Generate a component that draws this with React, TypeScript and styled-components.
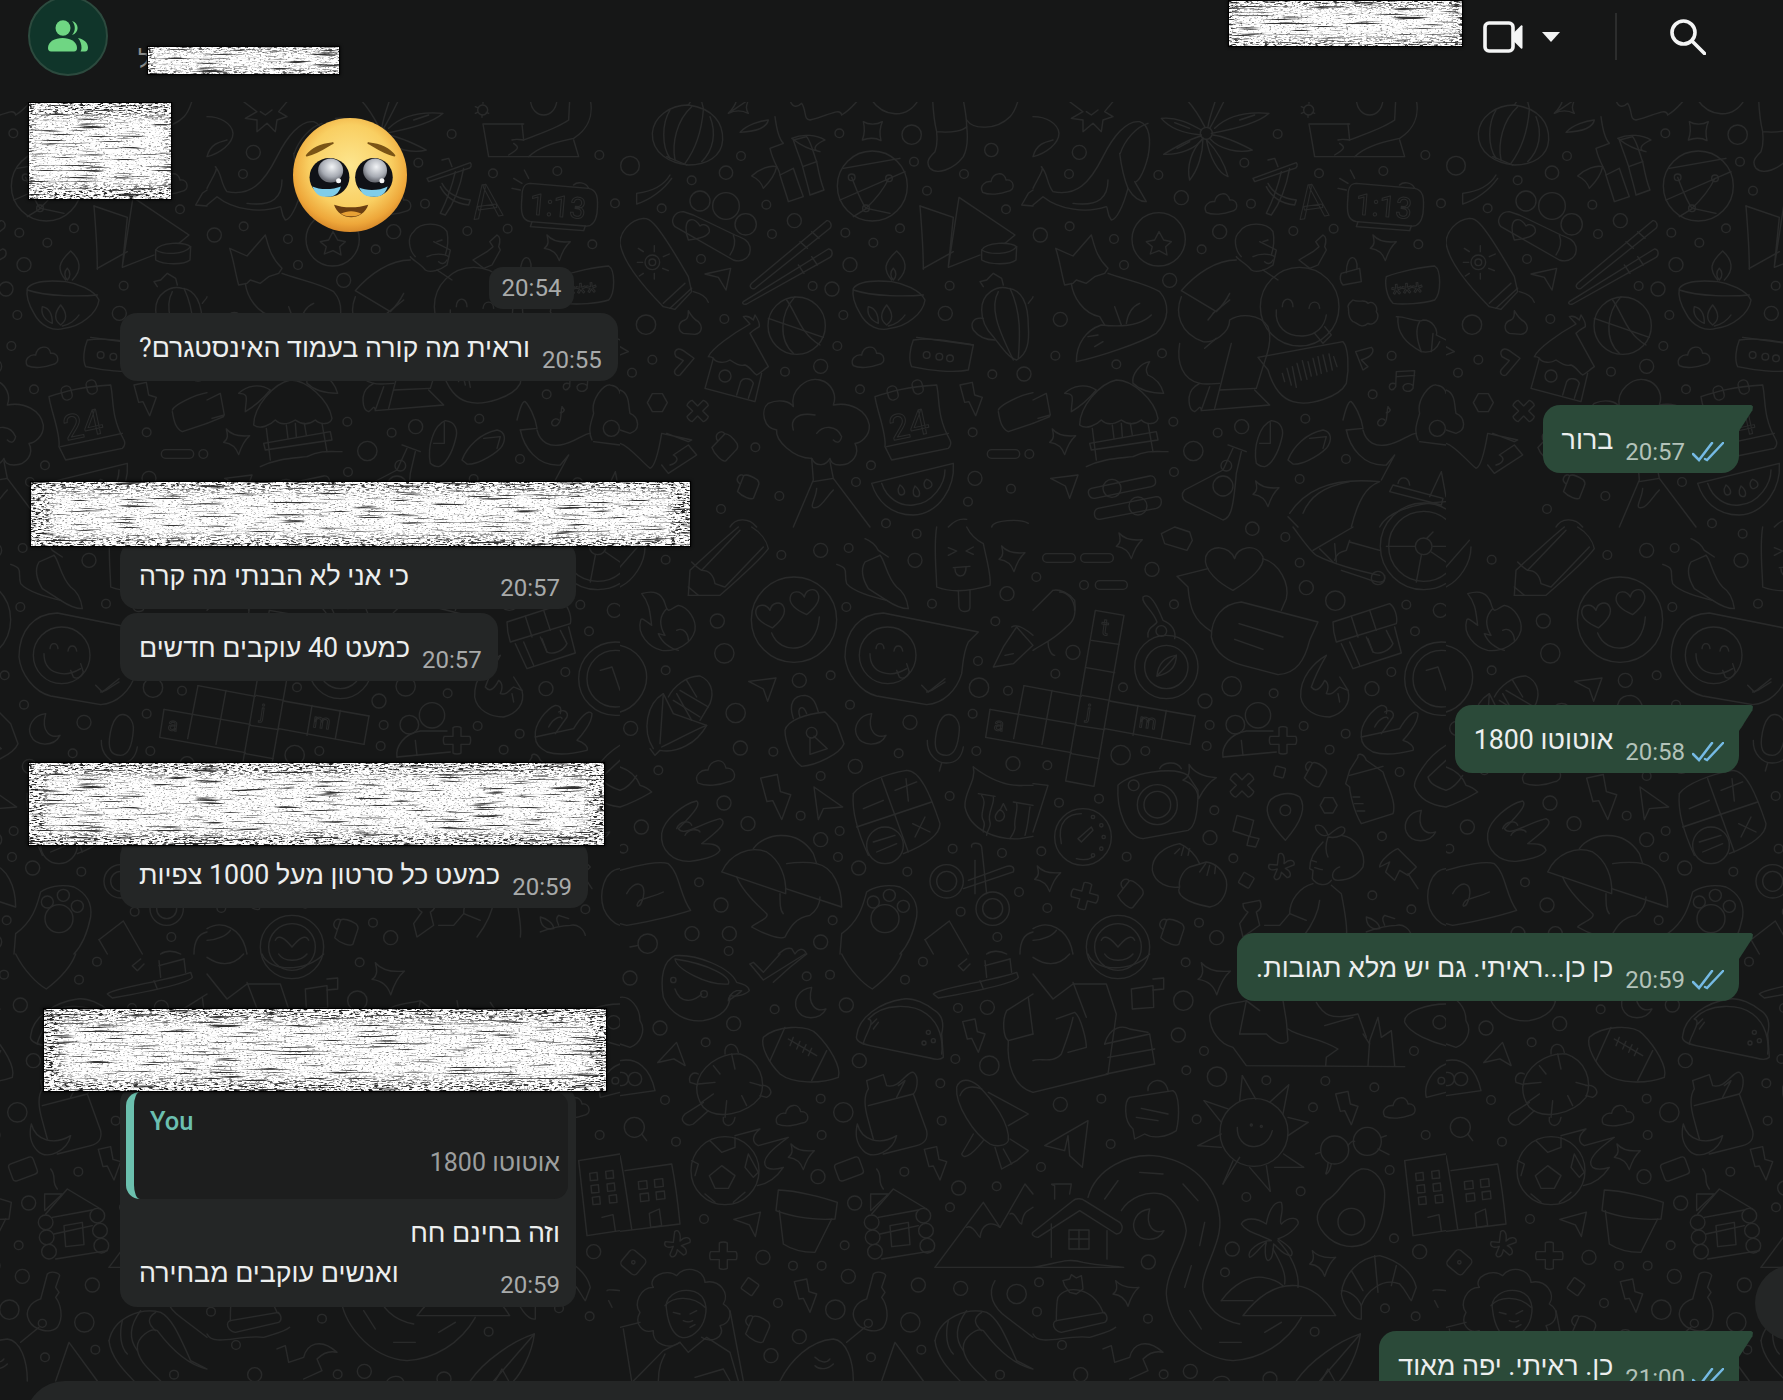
import React from "react";
import styled, { createGlobalStyle } from "styled-components";

const GlobalStyle = createGlobalStyle`
  html, body { margin: 0; padding: 0; background: #161717; }
  #root { height: 1400px; overflow: hidden; }
`;

const FONT = `Roboto, "Noto Sans", "Liberation Sans", sans-serif`;

const Page = styled.div`
  height: 1400px;
  display: flex;
  flex-direction: column;
  overflow: hidden;
  background: #161717;
  font-family: ${FONT};
  color: #eceeee;
`;

const Header = styled.header`
  flex: 0 0 102px;
  display: flex;
  align-items: flex-start;
  padding-left: 28px;
  background: #161717;
`;

const Avatar = styled.div`
  width: 80px;
  height: 80px;
  margin-top: -4px;
  box-sizing: border-box;
  border-radius: 50%;
  background: #10352a;
  border: 2px solid #2c4a3e;
  display: flex;
  align-items: center;
  justify-content: center;
  flex: none;
`;

const TitleBlock = styled.div`
  display: flex;
  align-items: flex-start;
  margin: 46px 0 0 30px;
`;

const TitleGlyph = styled.span`
  font-size: 24px;
  line-height: 26px;
  color: #8a8c8c;
  margin-right: -4px;
`;

const HeaderTools = styled.div`
  margin-left: auto;
  display: flex;
  align-items: flex-start;
  padding-right: 77px;
`;

const VideoButton = styled.div`
  display: flex;
  align-items: center;
  margin: 21px 0 0 20px;
  gap: 19px;
  height: 32px;
`;

const Caret = styled.div`
  width: 0;
  height: 0;
  border-left: 9px solid transparent;
  border-right: 9px solid transparent;
  border-top: 10px solid #f2f3f3;
`;

const ToolDivider = styled.div`
  width: 2px;
  height: 47px;
  margin: 13px 53px 0 55px;
  background: #2c2d2d;
`;

const SearchButton = styled.div`
  margin-top: 19px;
  height: 36px;
`;

const ChatPanel = styled.main`
  position: relative;
  flex: 1;
  min-height: 0;
  display: flex;
  flex-direction: column;
  overflow: hidden;
`;

const WallSvg = styled.svg`
  position: absolute;
  inset: 0;
  width: 100%;
  height: 100%;
  fill: none;
  stroke: #292a2a;
  stroke-width: 4;
  stroke-linecap: round;
  stroke-linejoin: round;
`;

const WallText = styled.text`
  font-family: Roboto, "Liberation Sans", sans-serif;
  stroke-width: 3;
  fill: none;
`;

const MessageList = styled.div`
  position: relative;
  flex: 1;
  min-height: 0;
  overflow: hidden;
  display: flex;
  flex-direction: column;
  padding: 16px 44px 0 120px;
`;

const Row = styled.div<{ $out?: boolean; $gap?: number }>`
  position: relative;
  flex: none;
  display: flex;
  justify-content: ${(p) => (p.$out ? "flex-end" : "flex-start")};
  margin-top: ${(p) => p.$gap ?? 24}px;
`;

const Bubble = styled.div<{ $out?: boolean; $w?: number }>`
  position: relative;
  display: flex;
  align-items: stretch;
  justify-content: space-between;
  gap: 12px;
  box-sizing: border-box;
  ${(p) => (p.$w ? `width: ${p.$w}px;` : "")}
  padding: 17px ${(p) => (p.$out ? 15 : 16)}px 9px 19px;
  border-radius: ${(p) => (p.$out ? "17px 0 17px 17px" : "17px")};
  background: ${(p) => (p.$out ? "#2b4a39" : "#242626")};
  ${(p) =>
    p.$out
      ? `&::after {
    content: "";
    position: absolute;
    top: 0;
    left: 100%;
    width: 14px;
    height: 26px;
    background: #2b4a39;
    clip-path: polygon(0 0, 88% 0, 100% 6%, 96% 20%, 0 100%);
  }`
      : ""}
`;

const MsgText = styled.div<{ $gapBelow?: number }>`
  font-size: 26.8px;
  line-height: 36px;
  margin-bottom: ${(p) => p.$gapBelow ?? 6}px;
  color: #eceeee;
  white-space: nowrap;
`;

const Time = styled.span<{ $out?: boolean }>`
  align-self: flex-end;
  font-size: 24px;
  line-height: 24px;
  color: ${(p) => (p.$out ? "#b3c2b9" : "#a8aaaa")};
  white-space: nowrap;
`;

const Meta = styled.div`
  align-self: flex-end;
  display: flex;
  align-items: center;
  gap: 7px;
  height: 24px;
`;

const ReplyBubble = styled.div`
  width: 456px;
  box-sizing: border-box;
  padding: 6px 16px 10px 6px;
  border-radius: 17px;
  background: #242626;
`;

const Quote = styled.div`
  box-sizing: border-box;
  margin-right: -8px;
  height: 107px;
  padding: 14px 8px 0 16px;
  border-left: 8px solid #6bc0ae;
  border-radius: 14px;
  background: #1d1e1e;
`;

const QuoteAuthor = styled.div`
  font-size: 25.5px;
  line-height: 30px;
  font-weight: 500;
  color: #6bbfb0;
  margin-bottom: 12px;
`;

const QuoteText = styled.div`
  font-size: 25px;
  line-height: 30px;
  color: #9c9e9e;
  text-align: right;
`;

const ReplyBody = styled.div`
  padding: 16px 0 0 13px;
  display: flex;
  flex-direction: column;
`;

const ReplyLine = styled.div`
  display: flex;
  justify-content: space-between;
`;

const RightLine = styled(MsgText)`
  text-align: right;
`;

const StickerBlock = styled.div`
  position: relative;
  flex: none;
  width: 454px;
  display: flex;
  flex-direction: column;
`;

const StickerFace = styled.div`
  margin-left: 173px;
  width: 114px;
  height: 114px;
`;

const StickerTime = styled.div`
  align-self: flex-end;
  margin-top: 35px;
  width: 85px;
  height: 42px;
  border-radius: 14px;
  background: #242626;
  color: #a8aaaa;
  font-size: 24px;
  line-height: 42px;
  text-align: center;
`;

const RedactBox = styled.div<{ $top?: number; $left?: number; $w: number; $h: number; $inline?: boolean }>`
  ${(p) =>
    p.$inline
      ? "position: relative; flex: none;"
      : `position: absolute; top: ${p.$top}px; left: ${p.$left}px; z-index: 2;`}
  width: ${(p) => p.$w}px;
  height: ${(p) => p.$h}px;
  box-sizing: border-box;
  border: 1px solid #000;
  box-shadow: 0 0 3px #000;
  background: #fff;
  overflow: hidden;
`;

const RedactSvg = styled.svg`
  display: block;
  width: 100%;
  height: 100%;
`;

const Composer = styled.footer`
  position: relative;
  flex: none;
  height: 60px;
  margin: 0 0 -41px 25px;
  border-radius: 40px 0 0 0;
  background: #242626;
  z-index: 3;
`;

const ScrollButton = styled.div`
  position: absolute;
  top: 1163px;
  right: -48px;
  width: 76px;
  height: 76px;
  border-radius: 50%;
  background: #242626;
  z-index: 3;
`;

/* ---------- small drawings ---------- */

const Redact = ({ w, h, top, left, inline, seed = 3 }: { w: number; h: number; top?: number; left?: number; inline?: boolean; seed?: number }) => (
  <RedactBox $w={w} $h={h} $top={top} $left={left} $inline={inline}>
    <RedactSvg aria-hidden="true">
      <rect width="100%" height="100%" fill="#fff" />
      <rect width="100%" height="100%" filter={`url(#grit${seed})`} />
      <rect x="3%" y="14%" width="94%" height="72%" fill="#fff" opacity="0.97" filter="url(#soft)" />
      <rect width="100%" height="100%" filter={`url(#speck${seed})`} />
      <rect width="100%" height="100%" filter={`url(#streak${seed})`} />
    </RedactSvg>
  </RedactBox>
);

const GroupIcon = () => (
  <svg width="40" height="32" viewBox="0 0 40 32" fill="#6fd683">
    <ellipse cx="15" cy="8" rx="7.5" ry="7.8" />
    <path d="M24 1c3.6 1 5.6 3.8 5.6 7s-2 6-5.6 7c1.8-2 2.8-4.4 2.8-7s-1-5-2.8-7z" />
    <path d="M0 28c0-6.500 7-10 14.500-10S29 21.500 29 28c0 2-1 3.500-3 3.500H3C1 31.500 0 30 0 28z" />
    <path d="M30 18c5.500 1 10 4.500 10 9.500 0 2.500-1 4-3 4h-4.500c.7-1 1-2.300 1-3.500 0-4-1.300-7.500-3.500-10z" />
  </svg>
);

const VideoIcon = () => (
  <svg width="40" height="32" viewBox="0 0 40 32">
    <rect x="2" y="2" width="28" height="28" rx="4" fill="none" stroke="#f4f5f5" strokeWidth="3.6" />
    <path d="M31 11.500 38 4.500c.7-.6 1.500-.2 1.500.7v21.600c0 .9-.8 1.300-1.500.7L31 20.500z" fill="#f4f5f5" />
  </svg>
);

const SearchIcon = () => (
  <svg width="36" height="36" viewBox="0 0 36 36" fill="none" stroke="#f4f5f5" strokeWidth="3.6" strokeLinecap="round">
    <circle cx="13.500" cy="13.500" r="11.500" />
    <path d="M22 22 34.500 34.500" />
  </svg>
);

const Ticks = () => (
  <svg width="32" height="20" viewBox="0 0 32 20" fill="none" stroke="#75bae4" strokeWidth="2.5" strokeLinecap="round">
    <path d="M1 12 7 18 20 1" />
    <path d="M13 17 15 18 31 1" />
  </svg>
);

const PleadingFace = () => (
  <svg width="114" height="114" viewBox="0 0 100 100">
    <defs>
      <radialGradient id="faceFill" cx="50%" cy="42%" r="58%">
        <stop offset="0%" stopColor="#fde68f" />
        <stop offset="62%" stopColor="#f9cf62" />
        <stop offset="88%" stopColor="#eea73a" />
        <stop offset="100%" stopColor="#d98a2a" />
      </radialGradient>
      <radialGradient id="eyeShine" cx="55%" cy="35%" r="60%">
        <stop offset="0%" stopColor="#f2f4f6" />
        <stop offset="70%" stopColor="#a7abb3" />
        <stop offset="100%" stopColor="#6d7078" />
      </radialGradient>
    </defs>
    <ellipse cx="50" cy="50" rx="50" ry="50" fill="url(#faceFill)" />
    <path d="M12 33C17 26 26 23 35 22 32 23 24 30 12 33Z" fill="#7a5416" stroke="#7a5416" strokeWidth="1.500" strokeLinejoin="round" />
    <path d="M89 33C84 26 75 23 66 22 69 23 77 30 89 33Z" fill="#7a5416" stroke="#7a5416" strokeWidth="1.500" strokeLinejoin="round" />
    <ellipse cx="32" cy="52" rx="17.500" ry="17" fill="#0f1116" />
    <ellipse cx="71" cy="52" rx="16.500" ry="17" fill="#0f1116" />
    <ellipse cx="33" cy="46" rx="11" ry="10.500" fill="url(#eyeShine)" />
    <ellipse cx="72" cy="46" rx="10.500" ry="10.500" fill="url(#eyeShine)" />
    <circle cx="40" cy="55" r="2.200" fill="#f5f6f7" />
    <circle cx="78" cy="55" r="2.200" fill="#f5f6f7" />
    <path d="M17 60C23 63 35 63 42 60 40 67 35 70 28 69 22 69 19 65 17 60Z" fill="#7fcdea" />
    <path d="M58 61C64 64 76 64 83 60 81 67 76 70 69 69 63 69 60 66 58 61Z" fill="#7fcdea" />
    <path d="M36 76C44 79 57 79 66 76 64 83 57 87 51 87 45 87 38 83 36 76Z" fill="#6b3f11" />
    <path d="M42 84C47 81 55 81 60 84 56 87 46 87 42 84Z" fill="#e8a135" />
  </svg>
);

/* ---------- wallpaper ---------- */

type Dot = [number, number, number];
const Dots = ({ list }: { list: Dot[] }) => (
  <>
    {list.map(([x, y, r], i) => (
      <circle key={i} cx={x} cy={y} r={r} />
    ))}
  </>
);
const Paths = ({ list }: { list: string[] }) => (
  <>
    {list.map((d, i) => (
      <path key={i} d={d} />
    ))}
  </>
);
const Sym = ({ d, x, y, s = 1, r = 0 }: { d: string; x: number; y: number; s?: number; r?: number }) => (
  <path d={d} transform={`translate(${x} ${y}) rotate(${r}) scale(${s})`} strokeWidth={4 / s} />
);

const CLOUD = "M-40 25C-52 5 -30 -10 -15 -7C-10 -35 25 -40 30 -12C55 -15 60 20 35 22C15 30 -20 35 -40 25Z";
const STAR = "M-32 -35C-15 -15 10 -12 38 -15C20 0 12 20 5 42C-2 20 -15 8 -40 5C-25 -5 -28 -20 -32 -35Z";
const BOLT = "M-32 -42L5 -50L12 -12L35 -5L15 50L-5 8L-18 10Z";
const LOCK = "M-35 -10L15 -35C25 -35 35 -15 40 5C40 15 35 20 30 22L-10 42C-20 42 -35 15 -35 -10Z M-12 -22C-18 -48 14 -52 15 -35";
const PLANE = "M-42 -15L40 -25L15 45L2 8Z";
const PLUS = "M-12 -38C-8 -42 8 -42 12 -38V-12H38C42 -8 42 8 38 12H12V38C8 42 -8 42 -12 38V12H-38C-42 8 -42 -8 -38 -12H-12Z";
const MOON = "M5 -50C-35 -45 -50 -10 -40 15C-25 50 30 50 48 15C20 25 -10 5 5 -50Z";
const HEART = "M0 38C-30 20 -48 0 -42 -20C-35 -40 -8 -38 0 -15C8 -38 35 -40 42 -20C48 0 30 20 0 38Z";
const HEX = "M-15 -27H15L30 0L15 27H-15L-30 0Z";
const ASTER = "M-8 -40C0 -48 12 -40 8 -12C28 -30 42 -20 38 -8L12 2C32 12 30 28 18 30L0 14C-4 40 -20 40 -22 28L-12 4C-34 12 -42 0 -36 -10L-12 -8Z";

const G1: string[] = [
  "M205 15C280 25 310 70 308 120C305 170 260 195 205 195C150 190 95 160 97 100C100 50 150 15 205 15Z",
  "M150 30C125 70 125 140 150 175", "M215 20C170 60 155 130 165 180", "M250 30C245 90 225 150 195 190", "M270 50C290 100 280 150 245 185",
  "M140 170L200 195", "M205 15L215 0L245 5L250 25", "M150 225C130 260 90 275 50 280L50 312C90 300 130 270 155 235",
  "M360 97C380 75 420 62 445 60C440 85 400 95 360 97Z", "M465 50C470 90 480 120 490 130L450 145C460 190 480 210 480 225L520 205",
  "M480 225C490 260 500 285 505 305L550 290C535 250 525 220 520 205", "M520 120C530 150 540 175 548 200L590 185C580 160 575 130 560 110Z",
  "M548 200C555 230 565 260 570 285L612 270C600 240 595 210 590 185", "M515 115C550 100 590 105 615 120C590 130 570 150 600 155C570 150 540 135 515 115Z",
  "M395 228C420 205 450 195 470 200C465 225 450 245 430 265C425 250 410 235 395 228Z",
  "M510 0C515 20 530 25 545 10C560 30 550 60 570 60C620 50 660 20 665 45C690 30 700 15 715 0",
  "M325 40C335 30 345 20 350 0M385 0C380 15 375 25 385 40C365 30 345 30 325 40Z",
  "M670 205L840 175M660 300L855 215M695 232C710 270 720 300 738 325M807 235C790 270 765 300 738 325M700 350L740 325L810 340",
  "M730 65C745 75 770 75 787 65C778 85 778 100 783 122C765 112 750 112 727 120C735 100 735 85 730 65Z",
  "M938 0C940 40 945 75 950 95C1000 100 1030 90 1040 80C1045 120 1040 150 1030 170C1000 210 950 225 930 205C915 185 930 170 945 155C955 130 950 110 950 95",
  "M1040 60C1060 90 1130 90 1170 50C1185 35 1190 15 1195 0", "M755 0C790 50 860 60 895 0", "M1030 0C1035 30 1040 50 1040 80",
  "M900 318L1000 352L985 500L1017 292L1185 405L1155 430", "M985 502L1080 465", "M910 505L1000 455", "M900 318C905 380 910 450 910 508",
  "M1085 450C1100 425 1170 425 1190 440L1188 480C1170 495 1110 495 1085 480Z", "M1085 450C1110 465 1170 465 1190 440",
  "M70 355C30 360 0 395 0 430C10 490 70 560 130 620L165 628L215 575L205 530C170 470 130 400 100 370C90 358 80 355 70 355Z",
  "M130 610L195 550", "M150 625L215 565", "M220 575C240 580 260 590 265 607",
  "M103 437V455M103 520V537M52 487H68M130 470L148 462M70 520L58 528M70 455L55 445M128 505L145 512",
  "M190 335C160 335 150 365 165 380L340 480C370 490 395 470 390 440C385 420 370 415 345 405L220 345Z", "M340 405C350 430 340 450 330 465",
  "M205 420C195 395 195 365 210 360C225 355 235 370 240 378C250 370 270 375 268 395C262 410 240 415 205 420Z",
  "M395 550L620 362C630 360 638 375 630 385L405 565C395 570 385 560 395 550Z", "M540 425L562 445", "M575 395L597 415",
  "M370 605L625 447C638 447 640 465 630 472L380 612C370 615 365 610 370 605Z", "M535 495L552 520", "M575 470L592 495",
  "M255 522L332 505L318 570L295 532Z",
  "M700 565C715 545 760 540 815 545C850 550 900 570 915 600C910 640 860 680 810 685C780 695 740 680 720 640C705 615 695 590 700 565Z", "M700 570C760 590 860 590 910 585",
  "M815 540C790 510 790 490 830 453C860 480 865 510 835 540", "M820 505C810 515 810 530 820 540C830 530 830 515 820 505Z",
  "M745 620C770 625 775 650 775 670C750 660 740 640 745 620Z", "M800 615C820 640 820 660 800 675C780 660 780 640 800 615Z", "M855 645C845 660 825 675 805 678",
  "M445 655L610 712", "M500 600C530 640 540 700 600 735", "M525 590C480 640 475 720 520 760",
  "M205 632C215 650 225 660 235 665C250 680 245 700 225 703L190 700C170 690 175 665 195 660C205 655 205 645 205 632Z",
  "M165 755C170 745 180 745 190 752L222 775L180 825C170 830 160 820 165 810L190 782L168 770C165 765 163 760 165 755Z",
  "M265 770C275 745 340 700 390 672L370 650C385 645 395 655 400 660L405 645C415 660 420 670 418 680C400 690 395 695 390 700L445 800C430 810 420 820 410 825C400 820 390 800 375 795C360 800 345 790 330 780C315 790 290 790 280 775C275 770 270 770 265 770Z",
  "M280 775L255 865L405 905L425 820", "M350 885L362 845C370 830 395 835 400 850L385 895",
  "M880 720C940 712 1000 725 1060 735L1045 810C1000 820 920 810 875 800C865 780 870 745 880 720Z", "M890 712L1060 735",
  "M1085 630C1085 580 1130 555 1165 565C1210 570 1225 620 1225 680C1228 720 1225 760 1190 780C1170 775 1150 750 1120 710C1100 690 1085 660 1085 630Z",
  "M1135 575C1110 620 1130 680 1180 780", "M1170 565C1205 640 1200 710 1195 775", "M1090 560L1080 545L1100 540L1120 520L1145 535L1150 555",
  "M1090 655C1060 650 1050 670 1060 690C1075 710 1100 720 1125 720", "M1225 610C1232 600 1239 595 1239 590", "M1205 315L1239 318M1205 315L1225 280L1239 270",
  "M575 1075C520 1075 465 1020 470 990C430 985 420 930 445 910C480 895 510 905 520 920C510 870 560 830 600 840C640 850 650 890 640 915C690 905 740 930 748 975C750 1010 720 1030 705 1030C720 1060 700 1095 660 1095C640 1095 630 1085 630 1075C620 1095 590 1105 575 1075Z",
  "M520 990C510 960 530 935 585 945", "M590 1000C610 975 650 975 665 1010C660 1030 650 1030 640 1020",
  "M575 1075L580 1140L520 1281", "M630 1085L640 1135L750 1281", "M580 1145L640 1135", "M590 1165C590 1195 560 1230 590 1222C605 1220 620 1190 640 1170",
  "M765 890C810 875 860 860 950 855C960 900 950 950 990 1020C995 1030 990 1040 985 1045L815 1080L795 1040C800 1000 770 930 765 890Z", "M800 1040L985 1000",
  "M1135 930C1140 915 1200 885 1239 878", "M1135 935C1140 965 1145 985 1165 995L1239 970",
  "M0 1030C30 1040 60 1080 90 1105C105 1100 115 1060 125 1000L215 1020L205 1025L140 1000M125 1095L145 1120L230 1065L205 1035L160 1065C180 1075 170 1090 150 1095M0 870C30 880 25 920 30 940C55 950 65 990 30 1000L0 990",
  "M755 1150L1000 1090C1005 1160 960 1240 880 1245C810 1245 770 1200 755 1150Z", "M785 1150C800 1195 840 1220 880 1215C940 1210 975 1150 975 1110",
  "M840 1155C830 1170 835 1185 845 1185C855 1185 860 1170 840 1155Z", "M885 1158C875 1175 880 1190 890 1190C900 1190 905 1175 885 1158Z", "M920 1138C905 1150 915 1170 925 1165C940 1160 940 1145 920 1138Z",
  "M0 740L25 755L0 765", "M1225 1270C1200 1255 1120 1260 1115 1281", "M985 1281C1005 1260 1020 1255 1040 1258", "M330 1281C345 1255 385 1250 410 1281",
];

const D1: Dot[] = [[30,197,28],[363,168,13],[318,218,20],[215,241,13],[125,325,13],[439,314,13],[523,362,21],[456,402,13],[658,100,13],[875,104,29],[882,185,13],[1114,150,20],[1032,222,13],[921,272,13],[1158,328,13],[676,398,13],[840,385,13],[760,428,13],[690,494,21],[578,558,13],[636,567,21],[670,645,13],[989,557,13],[976,640,21],[243,477,13],[78,674,29],[313,657,13],[97,779,13],[36,818,13],[652,738,13],[602,799,21],[495,815,13],[720,868,13],[1117,823,13],[1212,822,21],[1058,997,13],[406,1042,13],[753,1096,13],[708,1146,13],[1065,1135,21],[1173,1166,13],[1044,1205,13],[478,1188,13],[303,1227,13],[798,1270,13],[1228,1062,13],[240,303,30],[318,318,40],[377,373,32],[757,258,105],[695,232,10],[807,235,10],[738,325,10],[97,487,22],[97,487,10],[530,677,86],[315,828,18],[920,765,10],[958,770,10],[990,775,10]];

const G2: string[] = [
  "M0 265C20 225 35 205 25 200C45 220 40 250 60 275C130 290 170 250 210 170C240 110 280 60 320 65C350 75 355 120 345 170C330 230 310 250 305 245L340 305C320 305 300 290 285 265C270 320 250 360 235 360C220 340 225 320 220 320C160 340 80 330 30 290L0 315",
  "M260 160C265 200 275 240 285 265", "M225 240C225 290 200 320 120 310", "M345 70C310 80 275 120 262 160",
  "M0 50C40 50 75 70 78 100C78 130 40 160 0 170C10 130 40 125 60 120",
  "M110 5L150 35L115 55L150 60L150 95L180 70L205 95L210 60L240 50L215 35L240 5", "M160 35L175 45L195 30",
  "M505 90C470 70 430 50 385 55C410 85 450 100 505 105", "M545 85C590 40 650 35 708 40C680 65 620 85 535 100", "M540 105C580 110 620 130 658 150C620 160 560 150 530 115",
  "M520 118C550 150 575 190 585 230C555 220 530 170 520 118", "M510 115C510 160 495 210 470 240C460 200 475 150 510 115", "M505 108C470 115 430 140 392 163C440 165 490 145 510 115",
  "M515 80C500 50 480 20 462 0", "M525 80C530 50 540 25 548 0", "M575 0C560 30 545 60 530 85", "M620 60L665 45", "M425 68L470 85", "M432 145L470 125",
  "M830 72L950 72", "M828 72L845 170L1115 170L1100 120", "M945 72L950 120", "M915 120C930 115 945 120 950 120C1000 100 1050 85 1085 60L1088 0",
  "M1150 0C1160 50 1140 90 1100 115C1060 125 1000 135 965 170", "M920 130C935 140 940 145 905 165", "M970 0C975 60 1045 60 1050 0",
  "M805 20L812 23M805 40L812 37M825 52V46M845 40L838 37M828 5V10",
  "M660 235L790 188C797 195 790 205 785 205L665 245Z", "M705 180L725 175L735 200", "M770 205C760 260 740 310 715 345L700 340C720 300 735 260 745 215", "M705 250C720 280 750 295 790 300L785 315C740 310 715 290 700 260",
  "M970 250L1145 265C1170 270 1175 290 1170 340C1165 370 1150 380 1135 378L970 365C945 360 940 340 945 290C945 265 950 250 970 250Z",
  "M975 365L970 380L1130 392L1135 378", "M1100 255C1110 245 1135 245 1145 265", "M915 265L940 270", "M920 235L945 250", "M952 210L965 235",
  "M340 425L365 420L378 395L392 420L415 425L398 440L402 465L378 452L352 462L358 440Z",
  "M68 445L120 468L175 405C185 440 190 470 225 505L215 520L185 530L160 550L130 540L120 550L95 555C85 520 80 480 68 445Z",
  "M225 520C280 540 340 550 380 575C410 610 410 660 370 700C320 730 200 770 130 785C130 730 160 690 205 675C250 680 320 680 355 645",
  "M115 550C120 590 150 640 200 650L215 675", "M245 620L265 675", "M280 670C285 640 295 620 320 610", "M165 710L195 705M185 740L210 725",
  "M730 630C725 680 760 710 810 708C850 705 875 680 880 645", "M748 620C748 590 780 590 780 620", "M828 625C830 600 860 600 860 625", "M875 680L895 705L870 730L845 700",
  "M675 772L930 725C945 740 950 800 940 850C920 890 830 920 780 905C745 895 720 860 705 810Z",
  "M748 820L755 845M762 805L775 855M778 800L790 862M792 790L805 840M808 782L822 838M825 785L835 828M840 775L852 825M855 770L865 820M870 765L882 815M888 762L898 810M902 770L912 800",
  "M625 470C605 450 600 410 620 395C640 365 700 365 720 395C725 420 720 450 715 465", "M680 425L730 450L720 495C700 510 670 520 655 510C640 490 615 480 610 470", "M660 470C680 460 710 460 725 470M695 485C705 495 715 490 720 480M690 425L705 420",
  "M610 480C550 480 490 520 445 572L550 635C565 620 580 600 590 580", "M445 590C425 640 440 700 510 725C540 730 590 700 590 660C620 640 680 640 705 680C720 720 700 770 690 800L670 865",
  "M545 635L525 660", "M515 745L550 715", "M440 730C430 790 450 840 500 850C520 855 550 850 560 850", "M595 730L545 925", "M505 932L710 915L665 870", "M560 870L670 865",
  "M500 850L485 860C460 880 465 930 485 935C500 925 500 915 505 930L530 860", "M690 510L735 540", "M590 600L540 640",
  "M840 455L858 440L848 425L870 405C880 410 880 425 875 440L880 450L855 495L830 505L798 480Z",
  "M925 520L980 505L985 545L930 555C920 545 920 530 925 520Z", "M940 518C940 460 975 460 972 505",
  "M1060 530C1100 515 1170 500 1205 498C1225 510 1225 580 1205 600C1170 610 1110 615 1080 610C1060 590 1055 550 1060 530Z",
  "M960 600C980 610 995 595 1005 610C1020 600 1035 620 1030 635C1045 655 1020 680 1005 670C985 690 970 665 960 665C940 650 950 625 945 620C945 610 955 605 960 600Z",
  "M1090 650C1120 650 1160 670 1170 660C1200 660 1215 690 1210 705L1239 720", "M1095 650C1090 700 1120 730 1165 755C1190 760 1210 750 1220 725", "M1160 665C1145 690 1155 730 1165 755", "M1200 700L1195 755",
  "M968 755L1015 742C1025 750 1020 770 985 780L1005 800L990 810Z",
  "M1090 815L1145 812L1140 865C1130 880 1110 875 1110 860C1115 850 1130 848 1138 855M1090 815L1088 860C1080 875 1065 870 1070 855C1075 848 1080 848 1088 852M1092 830L1145 826",
  "M1065 920C1060 935 1065 960 1055 970C1045 985 1030 975 1035 965C1040 955 1050 955 1055 960M1065 920L1072 930C1070 935 1065 938 1060 938",
  "M140 975C140 920 200 850 250 840C300 840 365 900 375 955C370 975 340 975 325 960C305 975 285 975 265 960C240 975 220 975 205 960C190 975 160 990 140 975Z",
  "M178 985L190 1080", "M345 970L360 1055", "M170 1030L370 995L375 1020L175 1050Z", "M238 975L243 1015", "M265 970L268 1010", "M292 970L298 1005",
  "M160 1100C210 1075 260 1075 300 1070C340 1050 370 1055 405 1055",
  "M190 870C160 850 120 855 95 880C130 880 115 900 115 935C140 920 165 900 190 870Z", "M300 850C295 825 320 790 350 785C335 810 340 815 345 825C370 835 385 855 392 880C350 880 320 870 300 850Z",
  "M175 1165L350 1128C370 1125 375 1155 355 1160L185 1195C165 1195 160 1170 175 1165Z", "M195 1225L370 1190C390 1190 390 1220 370 1225L200 1258C180 1258 180 1230 195 1225Z",
  "M585 1035L640 1055", "M600 1045L570 1110L455 1170C445 1180 445 1195 460 1205L570 1260C590 1255 600 1240 610 1120L625 1055",
  "M670 1090C660 1040 680 975 715 962C745 965 755 990 745 1020C735 1060 715 1095 695 1100C680 1100 675 1095 670 1090Z", "M712 968L712 1030M680 1030L712 1030",
  "M765 1080C780 1040 820 1000 870 990C895 995 900 1020 880 1045C850 1075 800 1095 780 1092Z", "M830 1015L880 1010L870 1045",
  "M930 960C935 940 945 900 955 905C965 915 985 950 990 985L940 990", "M940 990C950 1040 990 1100 1060 1095L1085 1065L1045 1140", "M990 990C1000 1030 1030 1040 1060 1035C1100 1030 1130 1000 1150 1000",
  "M1155 1020C1140 990 1155 960 1160 940C1150 900 1190 850 1210 855C1239 860 1239 880 1239 880", "M1239 1035L1160 1025",
  "M770 1240C810 1180 880 1130 1040 1145C1000 1160 975 1200 955 1281", "M810 1240C830 1190 870 1160 950 1145", "M765 1250L795 1281", "M1080 1155L1230 1195L1225 1215L1070 1175Z", "M1095 1150C1100 1130 1125 1125 1130 1155", "M1190 1190L1225 1115L1239 1190", "M1040 1281C1060 1240 1130 1210 1239 1205",
  "M0 900L40 880L52 945L15 955M0 970L50 950",
];

const D2: Dot[] = [[139,157,21],[108,222,13],[376,225,13],[445,293,21],[634,188,13],[734,102,13],[654,311,13],[858,220,13],[1051,213,13],[1177,165,13],[22,405,21],[110,379,13],[243,417,13],[273,495,13],[560,395,21],[506,448,13],[781,393,13],[902,386,13],[1156,433,13],[410,541,21],[82,658,21],[1224,310,13],[67,767,13],[250,793,13],[387,760,13],[1076,767,13],[1019,883,13],[817,956,13],[421,965,13],[626,980,21],[554,998,13],[481,1053,29],[423,1116,13],[939,1077,13],[800,1137,13],[520,100,18],[827,30,15],[377,418,80],[800,620,118],[237,1165,27],[315,1218,27],[580,1097,16],[570,1158,30],[1213,985,24]];

const G3: string[] = [
  "M205 205L210 130C240 100 330 20 355 0", "M205 205L300 205C340 170 420 100 445 65C440 40 420 15 395 0", "M215 105C225 115 235 125 245 130C265 130 280 140 285 170C300 175 310 180 315 180L430 60", "M245 130L360 10", "M205 180L235 205",
  "M65 200C100 190 125 195 135 230C145 265 150 245 175 235C205 240 230 280 225 310C215 350 170 375 125 370C85 360 50 320 62 280C65 270 75 280 95 295C90 260 90 230 65 200Z",
  "M140 245C115 270 120 300 135 325L115 320C125 345 150 365 175 370", "M170 310C190 300 205 320 205 340",
  "M455 318C480 385 590 385 598 270",
  "M650 112C690 125 670 135 680 170C700 195 760 210 800 220C830 240 850 245 865 245C860 205 845 190 830 180C800 150 795 100 780 85",
  "M735 35C760 45 770 60 775 70L805 90M780 85L735 105C720 130 730 160 745 185L800 220",
  "M950 0C940 60 950 140 950 180C1000 200 1060 190 1110 175C1115 150 1100 100 1090 50C1070 40 1050 20 1040 0", "M1015 190L1017 240C1020 258 1050 258 1050 240L1050 190",
  "M985 62L1010 72L985 85", "M1060 60L1038 72L1060 82", "M1000 122L1050 118", "M1005 125C1005 155 1040 155 1038 120",
  "M790 258C720 260 675 310 675 390C680 440 720 495 770 507L920 533C970 530 1010 490 1025 440C1030 400 1030 375 1045 345L1075 315L790 258Z",
  "M750 380C750 440 810 455 860 425", "M768 365C770 345 790 345 792 365", "M822 372C825 352 845 352 848 372", "M830 430L838 450C850 458 862 450 868 435L860 410",
  "M905 475L925 495L975 455", "M920 495L935 490L975 465",
  "M1120 420L1150 360L1190 300L1239 355L1180 410Z", "M1175 300C1190 290 1210 300 1239 325", "M1155 385L1180 380",
  "M100 665C65 610 80 530 130 500L160 560L260 595C230 650 170 680 120 670L105 685L90 665", "M130 500L120 650", "M145 510C160 480 200 445 240 447C270 460 285 490 270 530L240 580",
  "M160 520L240 570", "M180 490L265 540", "M200 460L230 510", "M170 500L215 580", "M125 660C170 640 220 610 260 595",
  "M520 575C505 530 520 505 555 505C585 510 590 540 595 555", "M540 570C530 540 550 530 560 560",
  "M495 610C500 580 560 560 615 555L650 590L672 650C660 680 590 715 545 718C515 700 495 640 495 610Z", "M570 632L570 682L622 665L582 628",
  "M950 670C940 650 950 580 975 565C1000 555 1020 580 1018 610C1015 650 1005 685 980 685C965 685 955 680 950 670Z", "M922 640C920 680 950 710 980 708C1010 708 1025 690 1030 660", "M965 708L958 732",
  "M125 920C130 880 190 830 230 822C240 830 235 845 175 905C190 930 240 890 300 875C320 885 310 900 245 950C270 950 295 950 300 970C290 990 240 1000 210 1003C160 1005 120 970 125 920Z", "M170 905C180 880 210 880 215 895", "M195 925C205 905 235 905 240 915",
  "M582 780L668 840L610 845L595 878Z",
  "M700 800C720 770 800 740 860 730C900 730 930 800 960 890C960 930 900 960 850 980", "M700 800C695 850 715 920 745 985", "M785 755L865 975", "M710 900L935 825", "M730 845L790 820", "M825 790L890 765", "M858 755L865 822", "M878 890L930 915", "M915 870L885 930",
  "M760 945L825 925", "M770 975L830 950",
  "M305 1035C330 980 390 955 440 975C480 1000 500 1050 497 1100L305 1035Z", "M400 965C430 920 530 900 580 980L590 1010C640 1020 665 1080 665 1140L497 1085",
  "M350 1050C370 1100 420 1140 440 1160C450 1175 400 1190 395 1200C430 1220 480 1240 495 1230C510 1200 530 1170 570 1165C590 1150 600 1130 600 1110", "M480 1100C480 1130 480 1150 490 1160", "M500 1010C530 1005 570 1005 590 1010",
  "M1060 720C1100 750 1150 780 1210 775L1239 775", "M1060 720C1070 760 1030 800 1035 840C1050 910 1130 940 1200 935L1239 928",
  "M1075 800L1125 808", "M1085 805C1105 830 1075 860 1090 880C1100 900 1085 905 1090 915", "M1120 810C1125 830 1100 860 1110 885C1115 900 1100 910 1100 925", "M1180 825L1239 835", "M1190 830C1195 850 1180 880 1185 900C1185 915 1175 925 1170 935", "M1230 840C1225 870 1225 890 1215 925", "M1140 850L1150 830L1160 850", "M1140 848C1165 860 1150 890 1130 880C1120 870 1130 855 1140 848Z",
  "M1030 1085L1180 1035C1185 1020 1175 1015 1160 1018L1045 1060", "M1055 960C1050 945 1080 945 1085 960L1100 1100", "M1065 1100L1065 1000",
  "M660 1281L665 1220C720 1180 730 1130 740 1095C760 1080 800 1070 840 1080C880 1100 895 1130 890 1170C880 1220 860 1260 840 1281",
  "M0 1030C50 1015 120 1000 145 1010C180 1040 180 1110 212 1150C150 1170 60 1190 20 1195L0 1190", "M20 1100C40 1060 80 1060 70 1110C60 1150 40 1140 60 1120C80 1110 100 1110 130 1095",
  "M915 1238L988 1182L1045 1281", "M940 1281L915 1238", "M0 355C50 365 80 410 80 450C80 500 40 545 0 555", "M0 180C40 160 75 110 75 60", "M0 120L70 40",
  "M0 720C30 730 50 750 60 775C80 780 90 790 95 795C70 810 30 830 0 840", "M0 790C15 785 35 770 50 745", "M30 1260L55 1255", "M475 1281C490 1270 500 1260 515 1265L525 1281C535 1265 550 1260 560 1281",
  "M1239 1215C1215 1220 1200 1240 1200 1281", "M1100 1281C1115 1270 1140 1270 1160 1281",
];

const D3: Dot[] = [[137,98,13],[484,84,13],[602,70,21],[686,63,13],[885,100,21],[890,20,13],[1161,200,21],[936,230,13],[1126,283,13],[679,240,13],[292,282,21],[313,379,29],[137,430,13],[538,460,21],[632,445,13],[1074,402,13],[1077,482,29],[1164,491,13],[690,533,13],[347,558,29],[32,604,21],[361,663,21],[460,674,13],[115,730,13],[870,586,21],[836,679,13],[1058,560,13],[1069,672,13],[1179,710,21],[706,718,21],[602,747,13],[312,828,21],[384,890,21],[64,900,21],[542,866,13],[989,807,13],[659,912,13],[602,938,21],[654,990,13],[998,965,13],[1146,978,13],[716,1023,21],[862,1034,13],[10,965,13],[237,1066,13],[303,1134,21],[638,1180,13],[1022,1154,13],[1197,1095,13],[1132,1230,13],[216,1220,21],[328,1220,21],[602,1245,21],[83,1250,29],[326,1272,13],[522,278,128],[803,385,85],[575,617,16],[795,955,55],[980,1063,50],[980,1063,30],[1118,1145,50],[1118,1145,30],[760,1125,18],[808,1105,18],[850,1138,18],[795,1175,42]];

const G4: string[] = [
  "M0 250L60 190C80 185 110 200 125 220C130 270 120 285 100 300C60 340 30 350 0 370", "M80 195C105 195 125 220 125 250", "M45 345C45 365 55 385 65 385",
  "M385 20L425 0L470 15L478 40L462 70L395 50Z",
  "M187 250L273 265L183 778L98 762Z", "M175 340L258 352", "M160 422L245 437", "M147 505L230 520", "M130 595L215 608", "M115 680L198 695",
  "M-27 476L145 508M230 522L486 567", "M-129 547L130 592M215 605L471 652", "M-142 631L115 677", "M486 567L471 652", "M-129 547L-142 631", "M-27 476L-58 635", "M57 490L27 652", "M315 535L300 625", "M400 550L385 635",
  "M600 190C560 170 510 130 518 90C530 50 590 55 605 95C610 60 670 45 690 90C695 120 650 160 600 190Z", "M525 125L432 148L465 180C470 240 480 280 535 313", "M690 95C740 110 770 170 760 215L745 250",
  "M625 225C570 230 535 270 535 330C545 380 590 405 630 415L735 443C790 440 815 400 830 340L855 285L625 225Z", "M618 290L750 330", "M605 337L690 367",
  "M430 385C430 420 410 440 372 447C375 410 395 390 430 385Z", "M372 447L430 385", "M345 330C340 300 370 295 372 285C360 250 325 230 330 210C350 195 370 230 390 280C415 290 430 310 425 335",
  "M900 285L1070 230C1085 240 1095 270 1090 290L910 345C905 330 900 300 900 285Z", "M955 268L975 330", "M1010 250L1030 310", "M925 350L960 425L1105 378L1085 300", "M1005 335L1020 375C1040 385 1070 370 1080 350L1060 310", "M950 345L980 415", "M1000 330L1020 375",
  "M880 385C845 405 800 450 803 510C810 550 850 570 890 570C930 560 955 530 945 490L920 450", "M880 385C860 420 845 450 835 480C850 500 865 480 875 460C890 470 885 490 880 500C900 505 905 490 920 480L945 490", "M915 500L920 525",
  "M1180 430L1215 420L1239 490", "M1239 655C1180 690 1140 760 1145 780C1160 820 1200 835 1239 840", "M1239 700L1185 750C1190 770 1210 780 1239 790",
  "M570 690C565 660 590 620 640 612L720 612", "M570 690L730 675", "M625 640L630 685",
  "M985 630C980 590 1020 545 1045 535C1060 535 1065 545 1060 560", "M1055 555C1070 545 1085 555 1080 570L1045 620", "M1025 600C1040 570 1065 565 1065 575", "M1100 605C1120 570 1145 545 1155 560C1155 590 1120 630 1110 640C1130 645 1145 660 1140 670C1100 680 1050 685 1020 675C1000 665 985 650 985 630Z",
  "M975 690C970 680 990 675 1000 700L1050 735L1055 750C1070 790 1090 830 1080 860L985 890C960 850 950 790 950 780L938 770L950 730Z", "M950 745L1050 718", "M960 810H980M965 830H990M972 852H995",
  "M255 775C290 740 420 715 465 745L495 790C495 840 490 900 465 910L330 935C280 930 250 850 255 775Z", "M380 725C390 705 430 700 445 725",
  "M757 940C720 900 700 870 703 840C710 800 770 790 800 810C820 840 810 880 757 940Z",
  "M85 950C70 880 110 860 145 860", "M130 995C150 1000 165 1000 180 990", "M135 935L175 900L180 910L145 945Z",
  "M612 865L662 880L650 928L600 912Z", "M648 928L678 935L668 960L642 955Z",
  "M440 950C390 960 355 990 358 1030C365 1070 410 1085 440 1080C430 1100 450 1125 530 1140C570 1135 585 1090 580 1060C570 1030 550 1010 520 1005L470 1020C450 1030 435 1060 440 1080", "M440 950C465 960 490 985 500 1010", "M425 980L440 965M445 985L452 960M465 985L470 965", "M500 1035L518 1010M522 1045L530 1015M545 1040L548 1015",
  "M880 925C860 930 840 900 850 895C870 890 880 910 885 925C905 910 925 890 935 905C940 925 910 935 885 930C880 945 875 970 885 990", "M925 925C970 930 1000 980 990 1020C970 1050 940 1060 915 1060C890 1060 895 1030 920 1020", "M870 945C845 970 830 1000 830 1025L840 1030L838 1055C850 1075 880 1080 895 1060", "M845 1022C855 1025 862 1028 868 1028M835 1000L850 1005",
  "M840 1070C800 1080 770 1120 770 1160L740 1195L695 1195", "M895 1075L925 1100C935 1150 945 1200 940 1230", "M770 1160L820 1180", "M860 1120C855 1170 825 1210 810 1230", "M630 1130L680 1120C690 1140 680 1150 670 1155L680 1195L630 1230L620 1190L645 1155C635 1150 630 1140 630 1130Z",
  "M1095 965L1150 1020L1125 1045L1100 1030L1085 1060L1058 1035L1070 1005L1040 1020C1040 1000 1080 970 1095 965Z", "M1125 1040L1155 1085",
  "M1000 1215C1040 1200 1060 1195 1090 1195C1110 1190 1130 1205 1135 1225", "M1055 1195C1045 1175 1050 1170 1055 1165L1085 1175", "M1000 1170C1020 1175 1040 1190 1040 1205C1015 1210 1000 1195 1000 1170Z",
  "M0 1205C50 1175 100 1210 115 1260L120 1281", "M0 1240C30 1240 60 1225 70 1210", "M1239 1025C1190 1030 1175 1100 1190 1145C1200 1170 1220 1190 1239 1195",
  "M205 1240C215 1220 235 1235 255 1260C275 1235 295 1220 305 1240",
  "M780 0C810 40 830 70 850 85C900 110 970 130 1040 145", "M840 70L960 0", "M860 65L900 105", "M905 50L910 105", "M950 40L940 70C920 75 910 80 905 100", "M950 45L1040 70", "M925 130L1000 155C1040 170 1060 170 1055 145",
  "M1060 58H1145M1200 58H1239M1150 165L1165 85M1200 15L1180 35M1195 75L1239 105", "M0 770L45 775L15 870L0 915",
];

const D4: Dot[] = [[357,127,21],[10,150,13],[153,174,13],[423,232,13],[120,376,21],[67,440,13],[270,481,13],[596,478,29],[516,522,21],[722,499,13],[530,594,13],[521,657,13],[263,684,29],[337,672,13],[43,715,13],[757,30,13],[800,107,13],[820,182,21],[907,221,29],[1120,233,13],[1146,313,13],[1222,250,21],[1075,435,13],[1017,485,21],[812,597,13],[938,620,13],[890,668,13],[1100,735,13],[78,827,13],[198,815,13],[544,850,13],[531,932,21],[25,973,13],[281,989,13],[601,994,13],[43,1143,13],[498,1187,13],[551,1232,21],[1047,928,13],[1018,1105,13],[1135,1147,13],[658,5,20],[400,420,95],[400,420,65],[385,312,16],[607,593,28],[675,565,38],[1225,455,110],[1225,455,85],[373,833,60],[373,833,40],[302,775,16],[757,850,16],[150,930,85],[180,870,5],[205,895,5],[212,930,5],[205,965,5],[180,985,5],[255,1260,95],[255,1260,70],[1172,58,130],[1172,58,105],[1172,58,25],[1035,153,20]];

const G5: string[] = [
  "M165 5C130 20 120 70 130 130C150 180 200 205 250 200C300 190 330 165 330 125C350 130 380 120 388 110C385 95 370 90 350 85C330 40 230 0 165 5Z", "M165 15C170 45 260 95 325 90C335 70 270 30 165 15Z", "M165 105C180 150 220 145 245 120", "M325 140C340 130 355 120 365 110L350 110C335 115 325 130 325 140Z",
  "M665 0C690 50 730 90 757 105C790 80 830 40 845 0", "M390 30L430 78L555 0", "M460 85L510 40L560 0", "M390 30L400 25L430 55L480 0",
  "M940 120C960 100 1100 85 1190 55L1195 70C1180 90 1050 115 955 132Z", "M1080 80L1090 105", "M1095 20L1100 70", "M1170 15L1175 55", "M1095 35L1170 15M1015 35L1040 15M1015 35L1030 50L1050 30",
  "M230 400C235 340 300 295 360 300C420 320 440 380 420 430C380 480 290 500 250 460C235 440 230 420 230 400Z", "M315 300C310 265 350 260 355 295", "M250 445L195 480C175 500 200 520 220 510L265 470", "M420 395C450 390 465 420 440 430L420 425", "M235 360C215 350 205 370 210 385L232 392", "M310 490C305 520 340 525 345 490",
  "M345 345L335 300M390 385L425 395M365 425L380 455M320 440L315 490M280 420L245 445M285 385L235 390M300 360L280 335",
  "M430 250C470 215 560 210 590 240C630 280 665 340 655 370C600 390 520 390 480 360C450 330 420 280 430 250Z", "M495 220L450 320", "M620 290L575 380", "M505 255L590 305", "M520 250L510 275M540 262L530 285M558 272L548 295M575 283L565 305",
  "M710 245C715 190 780 145 850 135C880 130 920 150 945 170C975 190 970 220 965 240L970 310C960 320 940 315 930 312L750 275C725 270 705 260 710 245Z", "M745 195C770 200 730 250 730 270", "M745 195C790 145 880 150 920 180C960 210 970 260 965 300", "M755 210L770 195M760 225L775 205",
  "M740 380L790 362L800 395C840 405 860 350 880 355C900 370 890 410 880 420L920 530C925 560 910 570 890 575L790 600", "M740 380L745 405C735 420 730 450 745 500L760 555M745 455L880 420", "M835 395L855 380L830 430",
  "M712 510C725 560 780 575 830 545C820 590 760 620 730 590C710 570 705 540 712 510Z",
  "M1010 400C1020 370 1050 375 1075 395C1120 440 1170 510 1165 560C1160 575 1130 580 1110 570C1060 540 1005 450 1010 400Z", "M1020 425C1030 395 1060 395 1085 405", "M1105 415L1225 480L1165 515", "M1060 540L1025 600C1030 615 1050 610 1090 560", "M1125 580L1145 645L1190 620L1225 590L1170 555", "M1150 585L1175 630",
  "M305 635L345 665L325 703L285 703L268 665Z", "M270 560L305 595L345 580L345 550", "M385 600L415 655L400 670L375 640Z", "M215 620L235 630L225 665", "M255 720L285 745M340 745L375 715",
  "M345 545L420 525C395 545 395 565 415 575L505 550C450 590 420 620 440 640C455 650 475 645 490 640C470 670 440 690 412 695",
  "M475 708C530 710 610 730 652 745L645 795C590 800 520 790 468 770Z", "M478 770L490 870C520 890 560 895 585 895L635 795",
  "M755 780L820 705L920 765", "M752 720L805 720L752 770Z", "M770 645C790 670 770 680 790 705", "M775 790L895 768", "M780 840L895 815", "M785 915L940 890", "M810 815L865 805L870 872L815 878Z",
  "M945 940L1090 745L1140 820L1215 690L1239 720", "M945 940L1239 940", "M1040 820C1060 810 1075 850 1080 850C1085 810 1110 800 1140 820", "M1170 780C1185 770 1195 810 1205 810C1210 770 1225 770 1239 760",
  "M15 650L155 630C165 680 175 760 180 810L0 832", "M0 605C15 680 25 760 35 825", "M88 778L118 765L125 815L92 820Z",
  "M55 683L80 680L82 703L57 706ZM103 677L128 674L130 697L105 700ZM60 720L85 717L87 740L62 743ZM108 714L133 711L135 734L110 737Z",
  "M100 1000C80 970 140 940 170 965C190 935 250 940 255 985C300 975 330 1020 310 1050C345 1070 330 1110 300 1115C320 1150 270 1170 245 1150", "M100 1000C60 1000 40 1050 60 1075C40 1110 70 1140 100 1130C95 1170 150 1190 180 1165",
  "M140 1070C130 1030 170 1005 210 1010C250 1015 265 1050 255 1090C245 1130 210 1155 185 1150C160 1145 145 1110 140 1070Z", "M135 1055C160 1025 220 1025 255 1060", "M160 1075L180 1080M210 1080L230 1070M190 1100C200 1105 210 1105 218 1100M210 1120L225 1112",
  "M40 1281L130 1190L180 1165L205 1195L260 1150L330 1195L355 1281", "M0 1120L60 1105", "M10 1125L35 1281", "M115 1281C115 1240 125 1220 135 1200", "M225 1270L310 1245L330 1281", "M330 1070L370 1281",
  "M705 1100C690 1070 710 1045 740 1035L760 960C770 950 795 955 797 965L785 1000L795 1015L785 1030C800 1050 810 1090 790 1120C770 1140 720 1130 705 1100Z", "M735 1120L680 1165",
  "M480 1281C510 1220 570 1160 640 1155C680 1160 700 1220 700 1281", "M585 1210C600 1225 620 1230 630 1215", "M585 1235C600 1250 625 1245 640 1230", "M785 1281L825 1165L910 1281",
  "M945 1160C960 1090 1040 1060 1100 1075C1130 1090 1150 1130 1190 1220L1239 1245C1170 1230 1120 1170 1090 1130C1070 1120 1030 1150 1030 1180C1030 1220 1070 1250 1100 1281", "M945 1160C950 1210 990 1250 1020 1281", "M985 1100C975 1140 980 1180 1000 1200", "M1040 1070C1010 1110 1000 1150 1030 1190", "M1085 1075C1060 1090 1060 1110 1085 1130",
  "M1125 980C1100 1020 1120 1060 1160 1090L1239 1150",
  "M0 130C30 125 60 160 60 200C80 230 60 270 30 280L0 270", "M0 320C50 310 90 340 105 410L0 425", "M65 540L80 560",
  "M1239 120L1160 170C1145 200 1150 250 1165 260L1239 240", "M1165 260C1160 330 1180 400 1239 415", "M1225 130L1239 240",
];

const D5: Dot[] = [[30,72,21],[120,222,21],[341,209,21],[257,265,13],[560,67,13],[630,62,13],[464,166,13],[679,153,21],[909,23,13],[855,77,13],[1014,162,13],[1102,160,21],[1006,315,13],[718,320,21],[1108,335,29],[961,388,13],[602,434,13],[670,475,29],[965,500,13],[135,438,13],[168,563,13],[605,543,13],[594,668,21],[853,653,13],[1130,697,13],[1016,702,21],[990,760,13],[704,747,21],[252,795,13],[674,874,13],[429,910,21],[519,935,13],[605,935,13],[685,967,21],[895,993,21],[1022,1003,21],[1190,1020,29],[474,1047,13],[646,1067,29],[871,1105,29],[538,1148,21],[453,1205,21],[753,1210,13],[904,1187,13],[1140,1262,13],[160,78,8],[252,120,10],[925,235,6],[940,260,6],[912,267,6],[315,650,102],[755,805,22],[758,850,22],[765,893,22],[910,785,22],[918,830,22],[922,875,22],[745,1108,12],[45,375,20],[5,375,20],[43,520,30],[40,925,5]];

const G6: string[] = [
  "M0 60L60 135L120 90L220 90L250 180L225 360L0 415", "M220 360L365 330L350 240L215 270", "M225 310L365 285", "M215 270C230 215 270 215 290 225L345 235", "M120 85L160 190", "M0 320C20 310 60 330 85 300C100 260 115 215 120 190",
  "M70 195L125 175C145 190 160 260 160 280L105 295", "M0 10C30 30 70 45 110 0", "M165 0C185 55 300 55 350 0", "M215 0C230 25 280 25 300 0",
  "M295 105L360 95L362 160L298 165Z", "M360 75L392 72L392 105L360 108",
  "M640 140C600 150 540 150 530 185C530 230 560 270 600 280L640 335L1115 338", "M620 240L640 140L680 170", "M620 240L700 240C720 260 750 280 765 260L760 200L750 140",
  "M850 145C870 180 890 200 975 180L1000 250", "M765 225C800 250 860 250 915 285L880 310L878 335", "M875 215L960 190", "M1005 335L1010 260L1035 190L1045 250L1075 230L1085 335", "M990 240L1010 270",
  "M345 410C340 380 395 360 405 410", "M290 430L420 410C440 420 440 490 430 530C400 550 360 555 335 540L305 555L300 525C270 500 275 440 290 430Z", "M325 463L405 480", "M310 490L375 500",
  "M35 575L165 500L148 640L110 605L105 545L95 590L35 575Z",
  "M613 520C610 590 700 600 718 530",
  "M628 365L668 435", "M628 365L620 440", "M767 393L710 445", "M767 393L750 480", "M825 505L765 490", "M825 505L765 545", "M812 640L752 600", "M812 640L725 640", "M712 712L700 635", "M712 712L650 640", "M570 690L620 610", "M570 690L600 620", "M495 575L565 540", "M495 575L565 580", "M513 440L585 465", "M513 440L565 505",
  "M165 730C190 640 290 600 360 605C470 615 550 690 560 790C570 870 500 950 510 1010C520 1060 560 1100 620 1110", "M265 770C290 730 340 710 385 720C430 735 455 790 460 830C455 890 400 950 400 1020C405 1100 480 1210 600 1220C680 1215 760 1170 805 1090",
  "M320 655L390 660", "M215 735L255 680", "M450 690L495 740", "M500 875L515 805", "M455 1000L475 935", "M470 1070L505 1125", "M560 1165L625 1165", "M695 1135L745 1105",
  "M0 835L120 740C130 730 150 735 155 740L260 805C275 820 265 840 250 840L140 770L15 850C0 850 -5 840 0 835Z", "M65 735L65 695C50 690 55 690 70 690L115 690L110 720", "M55 810L55 910", "M222 830L222 915", "M108 828H168V885H108Z", "M138 828V885", "M108 855H168", "M0 940C70 930 100 910 150 925C200 935 240 935 272 940H0",
  "M715 860C680 840 640 835 625 810C635 790 670 790 700 810C705 780 720 740 745 745C755 775 735 800 745 810C770 785 800 790 795 810C780 835 750 850 735 855C760 870 785 890 775 905C750 905 735 880 722 870C720 890 720 915 705 920C695 915 695 880 700 865C680 880 660 910 650 910C640 890 680 860 715 860Z", "M735 860C775 900 800 960 795 1000", "M720 885C745 930 760 960 755 990",
  "M565 1040C600 990 650 965 690 970C720 975 740 985 750 995", "M565 1040H660", "M630 1085C680 1020 730 990 790 995C840 1000 880 1040 908 1085H630",
  "M945 575C950 565 960 560 965 562", "M862 595L848 600", "M885 628C885 650 875 660 880 660C890 655 893 640 895 630", "M1045 550L1060 545", "M1035 585L1068 602",
  "M1115 620L1239 600", "M1115 620L1140 845L1239 830", "M1185 790L1218 782L1225 830",
  "M1148 658L1170 655L1172 678L1150 680ZM1196 652L1218 649L1220 672L1198 674ZM1152 695L1174 692L1176 715L1154 717ZM1200 690L1222 687L1224 710L1202 712ZM1156 730L1178 727L1180 750L1158 752ZM1206 725L1228 722L1230 745L1208 747Z",
  "M985 645C1030 640 1055 690 1055 720C1055 770 1040 830 1010 860C970 890 910 880 875 840C840 800 850 770 880 740C920 720 940 660 985 645Z",
  "M925 1020C930 960 980 910 1040 905C1100 920 1140 960 1150 1000L1135 1040C1125 1030 1120 1010 1100 990C1050 970 1000 1010 985 1055L985 1095C960 1100 930 1050 925 1020Z", "M955 950L990 1010", "M1025 905L1035 1015", "M1090 935L1075 995", "M925 1010C950 1010 975 1030 985 1055",
  "M1200 1010C1200 1005 1239 1010 1239 1010M1205 1040L1215 1060",
  "M75 1030C100 990 180 1000 210 1075C225 1080 225 1100 215 1105L85 1135C60 1130 55 1105 70 1100C70 1070 70 1045 75 1030Z", "M70 1100L215 1075",
  "M95 995L90 980L110 975L115 962L130 972L145 965L148 985L150 1005L130 1020L110 1015Z",
  "M210 1185L235 1175L245 1225L290 1210C300 1170 340 1150 390 1195C370 1190 350 1195 330 1215L345 1250L290 1275", "M0 1140C20 1180 100 1140 170 1150C200 1140 230 1135 248 1120",
  "M790 1281C830 1220 920 1160 982 1140C975 1200 940 1260 920 1281", "M860 1281L982 1140", "M865 1281L885 1245L905 1281",
  "M1239 330C1200 345 1170 390 1180 430L1239 415", "M1239 150C1190 150 1110 170 1115 205C1130 240 1200 265 1239 275", "M540 1281C550 1265 580 1260 590 1281",
];

const D6: Dot[] = [[458,25,13],[451,140,29],[436,243,21],[513,291,13],[460,349,13],[552,368,29],[700,379,13],[877,381,13],[1024,400,13],[1143,291,13],[82,451,21],[205,434,13],[491,496,13],[840,460,13],[1178,543,13],[233,570,13],[24,639,13],[640,729,13],[803,712,13],[1070,648,13],[1083,853,13],[1160,893,21],[598,885,21],[346,924,21],[576,955,13],[18,985,13],[345,1094,13],[12,1073,13],[1056,1063,13],[1148,1087,13],[87,1173,13],[845,1133,13],[143,1262,21],[392,1261,13],[472,1252,21],[711,1275,21],[663,535,102],[655,513,3],[685,517,3],[905,588,42],[1003,562,42],[955,803,40],[1225,380,10],[1220,205,20]];

const Wallpaper = () => (
  <WallSvg aria-hidden="true">
    <defs>
      <pattern id="doodles" patternUnits="userSpaceOnUse" x="620" y="-2" width="826" height="1400">
        <g transform="scale(0.33333)">
          <g>
            <Paths list={G1} />
            <Dots list={D1} />
            <Sym d={CLOUD} x={1128} y={252} />
            <Sym d={CLOUD} x={740} y={772} />
            <Sym d={HEX} x={112} y={908} />
            <Sym d={PLUS} x={233} y={933} r={45} s={0.9} />
            <Sym d={BOLT} x={1052} y={897} />
            <Sym d={LOCK} x={312} y={1040} r={-20} />
            <Sym d={LOCK} x={382} y={1160} r={-42} s={0.9} />
            <rect x="1102" y="1049" width="97" height="26" rx="13" />
            <rect x="803" y="858" width="30" height="42" rx="14" transform="rotate(-15 818 879)" />
            <rect x="878" y="840" width="30" height="42" rx="14" transform="rotate(-15 893 861)" />
            <WallText x="805" y="1010" fontSize="105" transform="rotate(-12 870 960)">24</WallText>
          </g>
          <g transform="translate(1239 0)">
            <Paths list={G2} />
            <Dots list={D2} />
            <Sym d={CLOUD} x={560} y={312} />
            <Sym d={STAR} x={1052} y={440} />
            <Sym d={STAR} x={90} y={1022} />
            <Sym d={STAR} x={700} y={1178} />
            <Sym d={PLANE} x={95} y={1150} />
            <WallText x="792" y="352" fontSize="140" transform="rotate(-8 845 300)">A</WallText>
            <WallText x="968" y="350" fontSize="88" transform="rotate(5 1057 315)">1:13</WallText>
            <WallText x="1075" y="600" fontSize="72" transform="rotate(-5 1135 560)">***</WallText>
          </g>
          <g transform="translate(0 1281)">
            <Paths list={G3} />
            <Dots list={D3} />
            <Sym d={HEART} x={452} y={265} r={-8} />
            <Sym d={HEART} x={555} y={225} r={-8} />
            <Sym d={STAR} x={1177} y={92} />
            <Sym d={PLANE} x={428} y={478} s={1} />
            <Sym d={MOON} x={750} y={610} />
            <Sym d={CLOUD} x={282} y={738} s={1.2} />
            <Sym d={BOLT} x={465} y={810} s={1.35} />
          </g>
          <g transform="translate(1239 1281)">
            <Paths list={G4} />
            <Dots list={D4} />
            <Sym d={STAR} x={290} y={53} />
            <rect x="29" y="80" width="98" height="26" rx="13" />
            <rect x="143" y="80" width="98" height="26" rx="13" />
            <rect x="187" y="161" width="96" height="26" rx="13" />
            <Sym d={PLUS} x={750} y={640} />
            <Sym d={PLUS} x={155} y={1107} r={15} />
            <Sym d={PLUS} x={627} y={775} r={45} />
            <Sym d={LOCK} x={845} y={742} r={-35} s={0.9} />
            <Sym d={LOCK} x={290} y={1100} r={-25} s={1} />
            <Sym d={LOCK} x={415} y={1215} r={-45} s={1} />
            <Sym d={STAR} x={500} y={762} s={1.25} r={10} />
            <Sym d={STAR} x={45} y={1052} />
            <Sym d={MOON} x={1160} y={900} />
            <Sym d={HEX} x={887} y={835} s={0.85} />
            <Sym d={ASTER} x={745} y={1022} />
            <rect x="622" y="1042" width="36" height="36" rx="4" transform="rotate(30 640 1060)" />
            <rect x="725" y="720" width="30" height="30" rx="4" transform="rotate(15 740 735)" />
            <WallText x="205" y="325" fontSize="70" transform="rotate(8 220 300)">t</WallText>
            <WallText x="160" y="575" fontSize="60" transform="rotate(8 175 555)">j</WallText>
            <WallText x="318" y="605" fontSize="60" transform="rotate(8 350 585)">m</WallText>
            <WallText x="-118" y="612" fontSize="55" transform="rotate(8 -100 600)">a</WallText>
          </g>
          <g transform="translate(0 2562)">
            <Paths list={G5} />
            <Dots list={D5} />
            <Sym d={PLANE} x={155} y={310} r={-40} />
            <Sym d={PLANE} x={385} y={805} r={-8} />
            <Sym d={MOON} x={570} y={150} />
            <Sym d={BOLT} x={1060} y={245} />
            <Sym d={BOLT} x={945} y={628} />
            <Sym d={BOLT} x={555} y={1025} />
            <Sym d={CLOUD} x={512} y={485} />
            <Sym d={STAR} x={545} y={605} />
            <Sym d={ASTER} x={172} y={873} />
            <Sym d={PLUS} x={310} y={905} />
            <Sym d={LOCK} x={410} y={1125} r={-40} />
            <rect x="10" y="895" width="60" height="60" rx="12" transform="rotate(40 40 925)" />
            <rect x="370" y="978" width="40" height="40" rx="4" transform="rotate(35 390 998)" />
            <rect x="648" y="618" width="78" height="54" rx="10" transform="rotate(-20 687 645)" />
          </g>
          <g transform="translate(1239 2562)">
            <Paths list={G6} />
            <Dots list={D6} />
            <Sym d={STAR} x={545} y={70} s={1.25} />
            <Sym d={MOON} x={345} y={815} />
            <Sym d={BOLT} x={940} y={462} />
            <Sym d={CLOUD} x={1095} y={462} />
            <Sym d={STAR} x={870} y={925} />
            <Sym d={STAR} x={280} y={1015} />
          </g>
        </g>
      </pattern>
      <filter id="soft" x="-10%" y="-20%" width="120%" height="140%">
        <feGaussianBlur stdDeviation="4" />
      </filter>
      {[3, 7, 11].map((seed) => (
        <React.Fragment key={seed}>
          <filter id={`grit${seed}`} x="0" y="0" width="100%" height="100%" colorInterpolationFilters="sRGB">
            <feTurbulence type="fractalNoise" baseFrequency="0.2 0.8" numOctaves="3" seed={seed} />
            <feColorMatrix values="0 0 0 0 0.12 0 0 0 0 0.12 0 0 0 0 0.12 7 0 0 0 -3.7" />
          </filter>
          <filter id={`speck${seed}`} x="0" y="0" width="100%" height="100%" colorInterpolationFilters="sRGB">
            <feTurbulence type="fractalNoise" baseFrequency="0.35 0.9" numOctaves="2" seed={seed + 5} />
            <feColorMatrix values="0 0 0 0 0.35 0 0 0 0 0.35 0 0 0 0 0.35 3 0 0 0 -1.72" />
          </filter>
          <filter id={`streak${seed}`} x="0" y="0" width="100%" height="100%" colorInterpolationFilters="sRGB">
            <feTurbulence type="fractalNoise" baseFrequency="0.025 0.55" numOctaves="2" seed={seed + 9} />
            <feColorMatrix values="0 0 0 0 0.2 0 0 0 0 0.2 0 0 0 0 0.2 6 0 0 0 -3.65" />
          </filter>
        </React.Fragment>
      ))}
    </defs>
    <rect width="100%" height="100%" fill="#161717" stroke="none" />
    <rect width="100%" height="100%" fill="url(#doodles)" stroke="none" />
  </WallSvg>
);

const Out = ({ text, time, gap }: { text: string; time: string; gap?: number }) => (
  <Row $out $gap={gap}>
    <Bubble $out>
      <MsgText dir="rtl">{text}</MsgText>
      <Meta>
        <Time $out>{time}</Time>
        <Ticks />
      </Meta>
    </Bubble>
  </Row>
);

const In = ({ text, time, gap, width, children }: { text: string; time: string; gap?: number; width?: number; children?: React.ReactNode }) => (
  <Row $gap={gap}>
    {children}
    <Bubble $w={width}>
      <MsgText dir="rtl">{text}</MsgText>
      <Time>{time}</Time>
    </Bubble>
  </Row>
);

export default function App() {
  return (
    <Page>
      <GlobalStyle />
      <Header>
        <Avatar>
          <GroupIcon />
        </Avatar>
        <TitleBlock>
          <TitleGlyph>ל</TitleGlyph>
          <Redact inline w={193} h={29} seed={7} />
        </TitleBlock>
        <HeaderTools>
          <Redact inline w={235} h={47} seed={11} />
          <VideoButton>
            <VideoIcon />
            <Caret />
          </VideoButton>
          <ToolDivider />
          <SearchButton>
            <SearchIcon />
          </SearchButton>
        </HeaderTools>
      </Header>
      <ChatPanel>
        <Wallpaper />
        <MessageList>
          <StickerBlock>
            <Redact w={144} h={98} top={-16} left={-92} seed={7} />
            <StickerFace>
              <PleadingFace />
            </StickerFace>
            <StickerTime>20:54</StickerTime>
          </StickerBlock>
          <In gap={4} text="וראית מה קורה בעמוד האינסטגרם?" time="20:55" />
          <Out text="ברור" time="20:57" />
          <In gap={68} width={456} text="כי אני לא הבנתי מה קרה" time="20:57">
            <Redact w={661} h={66} top={-60} left={-90} seed={3} />
          </In>
          <In gap={4} text="כמעט 40 עוקבים חדשים" time="20:57" />
          <Out text="אוטוטו 1800" time="20:58" />
          <In gap={67} text="כמעט כל סרטון מעל 1000 צפיות" time="20:59">
            <Redact w={577} h={84} top={-78} left={-92} seed={7} />
          </In>
          <Out gap={25} text="כן כן...ראיתי. גם יש מלא תגובות." time="20:59" />
          <Row $gap={85}>
            <Redact w={564} h={84} top={-78} left={-77} seed={11} />
            <ReplyBubble>
              <Quote>
                <QuoteAuthor>You</QuoteAuthor>
                <QuoteText dir="rtl">אוטוטו 1800</QuoteText>
              </Quote>
              <ReplyBody>
                <RightLine dir="rtl" $gapBelow={4}>וזה בחינם חח</RightLine>
                <ReplyLine>
                  <MsgText dir="rtl">ואנשים עוקבים מבחירה</MsgText>
                  <Time>20:59</Time>
                </ReplyLine>
              </ReplyBody>
            </ReplyBubble>
          </Row>
          <Out text="כן. ראיתי. יפה מאוד" time="21:00" />
        </MessageList>
        <Composer />
        <ScrollButton />
      </ChatPanel>
    </Page>
  );
}
